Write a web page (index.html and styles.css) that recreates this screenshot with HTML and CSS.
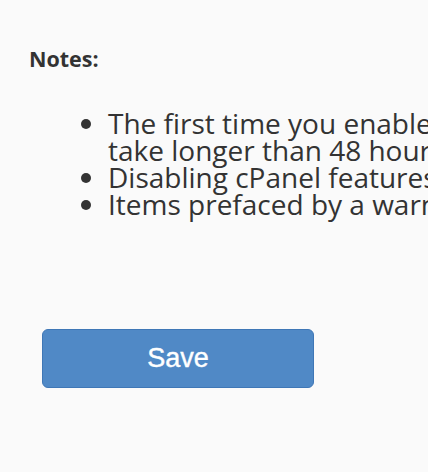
FILE: index.html
```html
<!DOCTYPE html>
<html>
<head>
<meta charset="utf-8">
<link rel="stylesheet" href="styles.css">
</head>
<body>
<div class="page">
  <p class="notes-title">Notes:</p>
  <ul class="notes-list">
    <li>The first time you enable this feature, the process may<br>take longer than 48 hours to complete.</li>
    <li>Disabling cPanel features does not remove existing data.</li>
    <li>Items prefaced by a warning icon require attention.</li>
  </ul>
  <button class="btn-save" type="button">Save</button>
</div>
</body>
</html>
```
FILE: styles.css
```css
html, body {
  margin: 0;
  padding: 0;
  background: #fafafa;
}
body {
  width: 428px;
  height: 472px;
  overflow: hidden;
  font-family: "Open Sans", "DejaVu Sans", sans-serif;
  color: #333333;
}
.page {
  padding: 44px 0 0 29px;
  overflow: hidden;
}
.notes-title {
  margin: 0;
  font-size: 21.5px;
  font-weight: 700;
  line-height: 30px;
}
.notes-list {
  margin: 36px 0 0 0;
  padding-left: 79px;
  font-size: 28px;
  line-height: 27px;
  white-space: nowrap;
}
.btn-save {
  display: block;
  margin: 111px 0 0 13px;
  width: 272px;
  height: 59px;
  background: #5089c6;
  border: 1px solid #3f77b6;
  border-radius: 6px;
  color: #ffffff;
  font-family: "Liberation Sans", Arial, sans-serif;
  font-size: 27px;
  padding: 0;
  -webkit-text-stroke: 0.4px #ffffff;
}
```
